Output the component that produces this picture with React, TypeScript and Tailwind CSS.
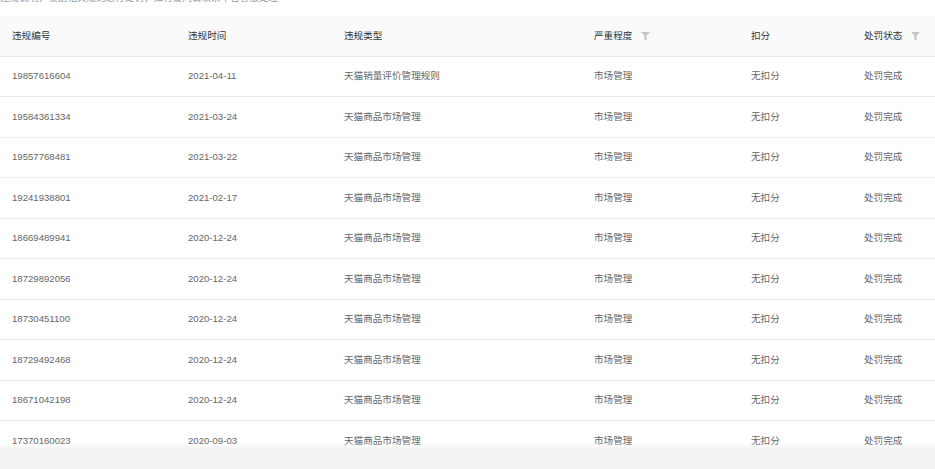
const rows = [
    { id: '19857616604', date: '2021-04-11', type: '天猫销量评价管理规则' },
    { id: '19584361334', date: '2021-03-24', type: '天猫商品市场管理' },
    { id: '19557768481', date: '2021-03-22', type: '天猫商品市场管理' },
    { id: '19241938801', date: '2021-02-17', type: '天猫商品市场管理' },
    { id: '18669489941', date: '2020-12-24', type: '天猫商品市场管理' },
    { id: '18729892056', date: '2020-12-24', type: '天猫商品市场管理' },
    { id: '18730451100', date: '2020-12-24', type: '天猫商品市场管理' },
    { id: '18729492468', date: '2020-12-24', type: '天猫商品市场管理' },
    { id: '18671042198', date: '2020-12-24', type: '天猫商品市场管理' },
    { id: '17370160023', date: '2020-09-03', type: '天猫商品市场管理' },
];

const FilterIcon = () => (
    <svg width="9" height="8" viewBox="0 0 9 8" className="inline-block ml-[9px] -mt-[1px] align-middle">
        <path d="M0 0 H9 L5.6 3.6 V8 H3.4 V3.6 Z" fill="#c4c4c4" />
    </svg>
);

const App = () => {
    return (
        <div
            className="relative h-[469px] w-full overflow-hidden bg-white text-[9.6px]"
            style={{ fontFamily: '"Liberation Sans", "Noto Sans CJK SC", sans-serif' }}
        >
            {/* Notice line (scrolled off) */}
            <div className="h-[16px] overflow-hidden">
                <p className="-mt-[8px] leading-[12px] text-[#999]">
                    违规说明，根据相关规则进行处罚，如有疑问请联系平台客服处理
                </p>
            </div>

            <table className="w-full table-fixed border-collapse">
                <colgroup>
                    <col className="w-[176px]" />
                    <col className="w-[156px]" />
                    <col className="w-[250px]" />
                    <col className="w-[157px]" />
                    <col className="w-[113px]" />
                    <col />
                </colgroup>
                <thead>
                    <tr className="h-[40px] bg-[#fafafa] border-b border-[#ececec] text-left text-[#333]">
                        <th className="px-[12px] font-normal">违规编号</th>
                        <th className="px-[12px] font-normal">违规时间</th>
                        <th className="px-[12px] font-normal">违规类型</th>
                        <th className="px-[12px] font-normal">
                            严重程度
                            <FilterIcon />
                        </th>
                        <th className="px-[12px] font-normal">扣分</th>
                        <th className="px-[12px] font-normal">
                            处罚状态
                            <FilterIcon />
                        </th>
                    </tr>
                </thead>
                <tbody className="text-[#666]">
                    {rows.map((r) => (
                        <tr key={r.id} className="h-[40.5px] border-b border-[#ececec]">
                            <td className="px-[12px]">{r.id}</td>
                            <td className="px-[12px]">{r.date}</td>
                            <td className="px-[12px]">{r.type}</td>
                            <td className="px-[12px]">市场管理</td>
                            <td className="px-[12px]">无扣分</td>
                            <td className="px-[12px]">处罚完成</td>
                        </tr>
                    ))}
                </tbody>
            </table>

            {/* Bottom bar overlay */}
            <div className="absolute bottom-0 left-0 right-0">
                <div className="h-[7px] bg-gradient-to-b from-white/0 to-[#f2f2f2]" />
                <div className="h-[19px] bg-[#f2f2f2]" />
            </div>
        </div>
    );
};

export default App;
